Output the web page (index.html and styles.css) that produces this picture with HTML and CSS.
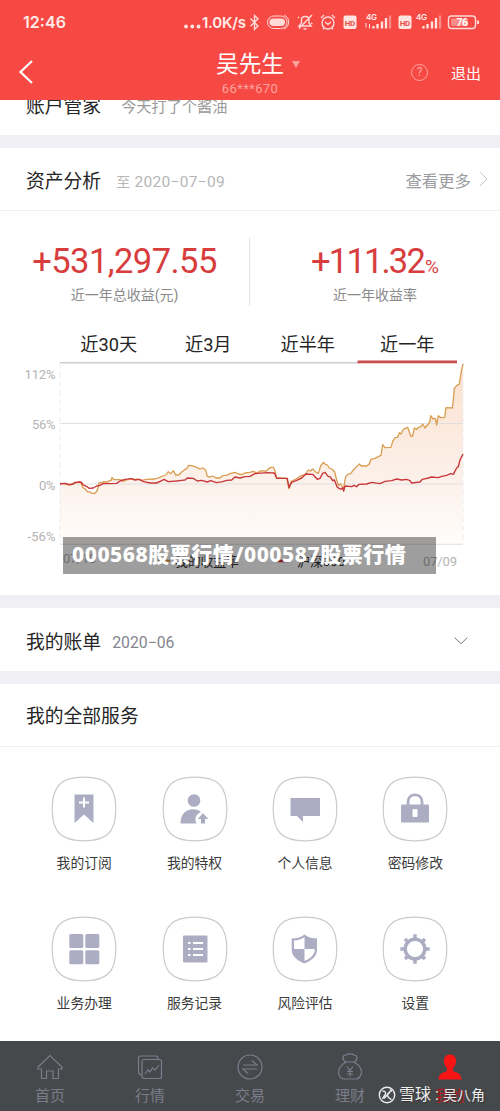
FILE: index.html
```
<!DOCTYPE html>
<html lang="zh-CN">
<head>
<meta charset="utf-8">
<title>账户</title>
<link rel="stylesheet" href="styles.css">
</head>
<body>
<div class="app">
  <header class="top">
    <svg class="status" viewBox="0 0 500 44">
      <g class="status-text">
        <text x="23" y="28" font-size="16" textLength="43">12:46</text>
        <text x="202" y="28" font-size="15" textLength="44">1.0K/s</text>
        <text x="366" y="19.500" font-size="8" textLength="11">4G</text>
        <text x="416" y="19.500" font-size="8" textLength="11">4G</text>
      </g>
      <g fill="#ffe5e2"><circle cx="186" cy="26.500" r="1.900"/><circle cx="192.300" cy="26.500" r="1.900"/><circle cx="198.500" cy="26.500" r="1.900"/></g>
      <g class="line-icon">
        <path d="M250.500 18.500 258 26l-3.500 3.300V15.500l3.500 3.300-7.500 7.400"/>
        <path d="M250 22.400h.4M259.800 22.400h.4"/>
        <rect x="267.500" y="16" width="19.500" height="12.500" rx="6.200" stroke-width="1"/>
        <path d="M284 15.500c6 1 6.500 11 0 13.500" stroke-width="1"/>
        <path d="M299 26h12l-2-3v-3.500c0-4-7.500-4-7.500 0V23zM303.500 29h3M312 15l-13 13.500M298 18l1-1M311 23l1.500 1"/>
        <circle cx="328" cy="23" r="6"/><path d="m325 22 3 2.300 3-2.300M321 18l3-3M335 18l-3-3M324 28l-1 1.300M332 28l1 1.300"/>
        <rect x="448.500" y="16" width="27" height="12.500" rx="3"/><path d="M478 20.500v3.500" stroke-width="2"/>
      </g>
      <rect x="269.500" y="18.500" width="15.500" height="7.500" rx="3.700" fill="#ffdcd9"/>
      <rect x="451" y="18.500" width="17" height="7.500" rx="1" fill="#f98c86"/>
      <g fill="#ffe5e2"><rect x="343.500" y="15.500" width="13" height="13.500" rx="2"/><rect x="398.500" y="15.500" width="13" height="13.500" rx="2"/></g>
      <g class="hd"><text x="344.800" y="25.600" textLength="10.500">HD</text><text x="399.800" y="25.600" textLength="10.500">HD</text></g>
      <text class="battery" x="456.500" y="26.200" textLength="11.500">76</text>
      <g class="bars"><path d="M373.500 28.500v-2.500M377.500 28.500v-4.500M382 28.500v-7M386 28.500v-10.500M423.500 28.500v-2.500M427.500 28.500v-4.500M432 28.500v-7M436 28.500v-10.500"/><path class="faint" d="M390 28.500v-13M440 28.500v-13"/><path d="M366 23v4.500M369.500 24v4.500" stroke-width="1"/></g>
    </svg>
    <div class="nav">
      <svg class="back" viewBox="0 0 16 26"><path d="M14 2 2.500 13 14 24"/></svg>
      <div class="user"><div class="user-name">吴先生<span class="caret"></span></div><div class="user-id">66***670</div></div>
      <div class="nav-right"><span class="help">?</span><span class="logout">退出</span></div>
    </div>
  </header>
  <section class="manager"><span class="title">账户管家</span><span class="note">今天打了个酱油</span></section>

  <section class="panel analysis">
    <div class="panel-head"><span class="title">资产分析</span><span class="date"><span class="to">至</span> 2020−07−09</span><span class="more">查看更多</span><svg class="chev" viewBox="0 0 9 16"><path d="m1 1 7 7-7 7"/></svg></div>
    <div class="stats">
      <div class="stat"><div class="num">+531,297.55</div><div class="label">近一年总收益(元)</div></div>
      <div class="stat"><div class="num ones">+111.32<small>%</small></div><div class="label">近一年收益率</div></div>
    </div>
    <div class="ranges"><span>近30天</span><span>近3月</span><span>近半年</span><span>近一年</span></div>
    <div class="chart">
      <svg viewBox="0 357 500 238">
        <defs>
          <linearGradient id="area" x1="0" y1="130" x2="0" y2="672" gradientUnits="userSpaceOnUse"><stop stop-color="#fbe1cd"/><stop offset=".62" stop-color="#fcf0e9"/><stop offset="1" stop-color="#fffdfb"/></linearGradient>
          <path id="mine" d="M180 490 190 490 200 493 208 496 218 491 228 489 238 485 243 490 248 502 256 507 262 515 270 516 275 520 283 520 288 517 293 508 297 489 305 487 315 485 322 487 328 482 333 482 336 472 341 479 360 479 370 484 380 480 390 476 402 479 412 477 425 481 440 478 465 477 478 473 488 468 498 465 505 455 512 461 520 452 527 465 536 465 545 456 554 449 560 446 566 436 575 437 590 442 600 447 608 444 617 450 622 469 630 471 637 468 648 474 660 474 668 467 680 466 692 460 705 457 715 462 725 464 735 459 750 457 760 454 770 459 785 452 798 454 806 446 813 442 820 442 825 453 830 473 860 475 867 506 873 484 888 477 905 466 915 465 925 450 932 453 938 447 945 455 955 460 962 438 970 427 976 433 982 435 988 444 996 447 1004 456 1010 480 1016 497 1022 491 1030 508 1037 470 1043 463 1052 461 1060 450 1070 440 1078 432 1084 438 1100 438 1108 432 1113 418 1125 415 1135 410 1143 406 1148 374 1155 383 1173 382 1178 364 1185 353 1193 352 1198 338 1203 342 1210 328 1223 322 1228 335 1232 348 1238 348 1243 324 1250 328 1256 322 1263 320 1268 312 1275 324 1285 312 1290 305 1292 287 1299 297 1306 295 1310 315 1315 287 1322 293 1334 292 1338 263 1357 264 1360 240 1363 205 1370 197 1378 192 1382 165 1386 145 1389 132"/>
        </defs>
        <g transform="translate(0 320) scale(.33333)"><path fill="url(#area)" d="M180 490 238 485 248 502 275 520 288 517 297 489 336 478 440 478 478 473 498 465 520 456 536 465 554 449 566 436 590 442 617 450 622 469 648 474 668 467 705 457 725 464 750 457 785 452 806 446 820 442 830 473 860 475 867 506 873 484 905 466 925 450 955 460 970 427 988 444 1004 456 1016 497 1030 508 1037 470 1052 461 1078 432 1100 438 1113 418 1143 406 1148 374 1155 383 1173 382 1185 353 1210 328 1223 322 1232 348 1238 348 1243 324 1263 320 1285 312 1292 287 1306 295 1310 315 1315 287 1334 292 1338 263 1357 264 1363 205 1378 192 1389 132V672H180z"/></g>
        <g class="grid"><path d="M60 423.500h403M60 484h403M60 544.300h403"/><path class="top-rule" d="M60 362.700h300"/><path class="dash" d="M60 363v181M463 363v181"/></g>
        <g transform="translate(0 320) scale(.33333)">
          <use href="#mine" class="mine"/>
          <path class="index" d="M180 492 195 490 210 494 220 492 225 487 243 486 250 495 262 501 268 505 280 504 290 498 300 496 310 490 325 491 350 490 360 483 375 478 395 476 405 480 418 478 430 485 450 489 470 489 485 482 492 478 505 485 530 483 545 481 555 480 562 474 580 475 592 483 605 481 622 486 632 482 650 488 668 485 680 481 695 480 705 471 720 474 735 470 750 469 765 461 800 458 823 459 830 475 862 475 867 503 875 487 890 481 905 474 917 462 938 463 945 470 952 478 960 475 968 460 975 457 985 470 990 470 998 482 1003 480 1012 502 1023 508 1028 503 1031 513 1035 498 1055 500 1062 496 1070 500 1077 493 1100 492 1115 487 1140 491 1155 484 1175 482 1190 477 1205 480 1220 478 1230 482 1235 489 1260 486 1267 478 1285 474 1295 471 1315 473 1325 469 1340 466 1352 461 1360 463 1370 444 1375 440 1380 420 1389 402"/>
        </g>
        <path d="M357.500 361.900h99.500" stroke="#c84f4d" stroke-width="2.800"/>
        <g class="axis"><text x="24.500" y="379" textLength="31">112%</text><text x="32" y="429" textLength="23.500">56%</text><text x="39" y="489.500" textLength="16.500">0%</text><text x="27.500" y="541" textLength="28">-56%</text><text x="63" y="562.500" textLength="33">07/10</text><text x="423" y="566" textLength="34">07/09</text></g>
        <g class="legend"><path d="M158 561h12" stroke="#d99d51"/><text x="175" y="566" textLength="64">我的收益率</text><path d="M276 561h13" stroke="#c8383b"/><text x="297" y="566" textLength="48">沪深300</text></g>
      </svg>
      <div class="banner">000568股票行情/000587股票行情</div>
    </div>
  </section>

  <section class="panel bill"><span class="title">我的账单</span><span class="bill-date">2020−06</span><svg class="down" viewBox="0 0 14 8"><path d="m.7.700 6.300 6 6.300-6"/></svg></section>

  <section class="panel services">
    <div class="services-head title">我的全部服务</div>
    <div class="service-grid">
      <div class="service"><svg viewBox="0 0 66 66"><use href="#tile"/><path fill="#acadc2" d="M23.500 18.500h19V47L33 38.500 23.500 47z"/><path d="M33 21.500v10M28 26.500h10" stroke="#fff" stroke-width="2"/></svg><span>我的订阅</span></div>
      <div class="service"><svg viewBox="0 0 66 66"><use href="#tile"/><g fill="#acadc2"><circle cx="32" cy="24.500" r="6.300"/><path d="M18.500 47.500C18.500 38 24 33.300 31 33.300c3.500 0 6 1 8 2.700-5 2-7 7-4.500 11.500z"/><path d="m41 37 5.200 6H43v4.500h-4V43h-3.200z"/></g></svg><span>我的特权</span></div>
      <div class="service"><svg viewBox="0 0 66 66"><use href="#tile"/><path fill="#acadc2" d="M18.500 22H48v18H31v6l-6-6h-6.500z"/></svg><span>个人信息</span></div>
      <div class="service"><svg viewBox="0 0 66 66"><use href="#tile"/><path d="M26 30v-4c0-9.500 14-9.500 14 0v4" fill="none" stroke="#acadc2" stroke-width="2.800"/><rect x="19" y="28.500" width="28" height="18" rx="1" fill="#acadc2"/><rect x="30.500" y="33" width="5" height="8" rx="1" fill="#fff"/></svg><span>密码修改</span></div>
      <div class="service"><svg viewBox="0 0 66 66"><use href="#tile"/><g fill="#acadc2"><rect x="18.300" y="18" width="14" height="14" rx="1.500"/><rect x="34.300" y="18" width="14" height="14" rx="1.500"/><rect x="18.300" y="34.200" width="14" height="14" rx="1.500"/><rect x="34.300" y="34.200" width="14" height="14" rx="1.500"/></g></svg><span>业务办理</span></div>
      <div class="service"><svg viewBox="0 0 66 66"><use href="#tile"/><rect x="21" y="19.500" width="24.500" height="27" rx="1" fill="#acadc2"/><path d="M26 27h2.500M26 33h2.500M26 39h2.500M31 27h10M31 33h10M31 39h10" stroke="#fff" stroke-width="2.200"/></svg><span>服务记录</span></div>
      <div class="service"><svg viewBox="0 0 66 66"><use href="#tile"/><path fill="#acadc2" d="M32.500 18.500c4 3 8 4 12.500 4V34c0 6.500-6 11-12.500 13.500C26 45 19.700 40.500 19.700 34V22.500c4.800 0 8.800-1 12.800-4z"/><path fill="#fff" d="M32.500 21v12H22v-8.500c4 0 7.500-1.200 10.500-3.500zM32.500 33h10.300c0 6-4.500 9.500-10.300 12z"/></svg><span>风险评估</span></div>
      <div class="service"><svg viewBox="0 0 66 66"><use href="#tile"/><g stroke="#acadc2" fill="none" stroke-width="3.500"><circle cx="33" cy="33" r="9.800"/><path d="M33 18.300v5M33 42.700v5M18.300 33h5M42.700 33h5M23 23l3 3M40 40l3 3M43 23l-3 3M26 40l-3 3"/></g></svg><span>设置</span></div>
    </div>
  </section>

  <nav class="tabs">
    <div class="tab"><svg viewBox="0 0 30 30"><path d="M3 15 15 3.500 27 15v2h-3.500v9.500H18V19h-6.500v7.500H6.500V17H3z"/></svg><span>首页</span></div>
    <div class="tab"><svg viewBox="0 0 30 30"><rect x="7" y="7.500" width="19.500" height="19" rx="2"/><path d="M7 23c-2 0-3.500-1-3.500-3V6c0-1.500.7-2 2-2H21c1.500 0 2 1.500 2 3.500M10 22l3-4 2 2 2.500-4 2.500 2 4-5"/></svg><span>行情</span></div>
    <div class="tab"><svg viewBox="0 0 30 30"><circle cx="15" cy="15" r="12"/><path d="M8 13h14l-5-4.500M22 17H8l5 4.500"/></svg><span>交易</span></div>
    <div class="tab"><svg viewBox="0 0 30 30"><path d="M11 10c-4-2-4-7 0-7 2-1.500 6-1.500 8 0 4 0 4 5 0 7 5 3 7.500 6 7.500 10 0 4-3 7-5.500 7H9c-3 0-5.500-3-5.500-7 0-4 2.500-7 7.500-10zM10.500 10h9M12 14.500l3 4 3-4M15 18.500v6M12 19.500h6M12 22h6"/></svg><span>理财</span></div>
    <div class="tab active"><svg viewBox="0 0 30 30"><path d="M15 2.500c4 0 6 3 6 6 0 4-1 5.500-3 7.500v3c4 2 8 2 8.500 8.500h-23C4 21 8 21 12 19v-3c-2-2-3-3.500-3-7.500 0-3 2-6 6-6z"/></svg><span>我的</span></div>
    <div class="watermark"><svg viewBox="0 0 18 18"><circle cx="9" cy="9" r="7.700"/><path d="M4.500 5c3 0 4 2 2.500 4s-2 2-2.500 4M13.500 4c-1 2-4 2.500-4 5s2 3.500 4 4.500M12 3.500l1.800 2M6 12.500 12 6"/></svg><span>雪球</span><span class="colon">:</span><span class="author">吴八角</span></div>
  </nav>
</div>
<svg class="defs"><defs><path id="tile" d="M33 1.200C56 1.200 64.800 10 64.800 33S56 64.800 33 64.800 1.200 56 1.200 33 10 1.200 33 1.200z" fill="#fff" stroke="#cbcbcd" stroke-width="1.200"/></defs></svg>
</body>
</html>
```
FILE: styles.css
```
* { box-sizing: border-box; }
body { margin: 0; background: #fff; font-family: Roboto, "Noto Sans CJK SC", sans-serif; color: #252525; }
.app { width: 500px; height: 1111px; overflow: hidden; background: #f0eff4; display: flex; flex-direction: column; }
.defs { display: block; width: 0; height: 0; }
.top { height: 100px; flex: none; background: #f74944; color: #fff; }
.status { display: block; width: 500px; height: 44px; }
.status-text { fill: #ffebe8; font-family: Inter, sans-serif; font-weight: 600; }
.line-icon { fill: none; stroke: #ffdcd9; stroke-width: 1.4; }
.hd { fill: #e7504b; font-size: 8px; font-weight: 700; }
.battery { fill: #fff; font-size: 10.5px; font-weight: 700; }
.bars { stroke: #ffe5e2; stroke-width: 2.3; }
.bars .faint { stroke: #fa8d88; }
.nav { height: 56px; display: grid; grid-template-columns: 130px 240px 130px; }
.back { width: 16px; height: 26px; margin: 15px 0 0 18px; fill: none; stroke: #fff; stroke-width: 2.2; }
.user { text-align: center; }
.user-name { height: 38px; line-height: 40px; font-size: 22.7px; padding: 3px 0 0 16px; display: flex; justify-content: center; align-items: center; }
.caret { margin-left: 8px; border: 4px solid transparent; border-top: 7px solid #fda29f; border-bottom: 0; }
.user-id { font-size: 13px; line-height: 13px; letter-spacing: .4px; color: #fda29f; }
.nav-right { display: flex; align-items: center; height: 57px; padding-left: 41px; }
.help { width: 17px; height: 17px; border: 1px solid #fda29f; border-radius: 50%; color: #fda29f; font-size: 12px; line-height: 15px; text-align: center; }
.logout { margin-left: 23px; padding-top: 2px; font-size: 15px; line-height: 20px; }
.manager { height: 35px; flex: none; background: #fff; overflow: hidden; padding-left: 26px; display: flex; align-items: flex-start; }
.title { font-size: 18.8px; line-height: 28px; }
.manager .title { margin-top: -7px; }
.note { margin: -7px 0 0 20px; font-size: 15.2px; line-height: 28px; color: #999; }
.panel { background: #fff; margin-top: 13px; flex: none; }
.analysis { height: 447px; }
.panel-head { height: 63px; display: flex; align-items: center; border-bottom: 1.5px solid #eee; padding: 4px 12px 0 26px; }
.panel-head .title { padding-top: 1px; }
.date { margin-left: 15px; color: #b6b6b8; font-size: 15.5px; letter-spacing: .3px; }
.to { font-size: 14px; }
.more { margin: -3px 0 0 auto; color: #9b9ba0; font-size: 16.4px; }
.chev { width: 9px; height: 16px; margin: -4px 0 0 8px; fill: none; stroke: #c5c5c8; }
.stats { height: 116px; display: grid; grid-template-columns: 250px 250px; padding-top: 26px; }
.stat { height: 69px; text-align: center; }
.stat:first-child { border-right: 1px solid #e4e4e4; }
.num { height: 49px; line-height: 49px; font-size: 34.5px; letter-spacing: -.55px; color: #d83d3d; }
.ones { letter-spacing: -1.8px; }
.num small { font-size: 19px; letter-spacing: 0; padding-left: 1px; }
.label { font-size: 14px; line-height: 18px; color: #8a8a8a; }
.ranges { height: 30px; display: grid; grid-template-columns: repeat(4, 99.5px); padding-left: 59px; text-align: center; font-size: 18.2px; line-height: 36px; }
.chart { height: 238px; position: relative; }
.chart svg { display: block; width: 500px; height: 238px; }
.grid { stroke: #e2e0df; fill: none; stroke-width: 1; }
.grid .top-rule { stroke: #ccc; stroke-width: 1.4; }
.grid .dash { stroke: #eee; stroke-dasharray: 6 3; }
.mine { fill: none; stroke: #d99d51; stroke-width: 3.9; stroke-linejoin: round; }
.index { fill: none; stroke: #c8383b; stroke-width: 4.2; stroke-linejoin: round; }
.axis { fill: #b4b4b4; font-size: 13px; }
.legend { fill: #333; font-size: 13px; stroke-width: 2.5; }
.legend text { stroke: none; }
.banner { position: absolute; left: 63px; top: 180px; width: 373px; height: 37px; padding-left: 9px; background: rgba(0, 0, 0, .38); color: #fff; font: 800 21px/34px "Noto Sans", "Noto Sans CJK SC", sans-serif; letter-spacing: .56px; white-space: nowrap; }
.bill { height: 63px; display: flex; align-items: center; padding: 6px 32px 0 26px; }
.bill-date { margin-left: 11px; font-size: 15.8px; color: #85858e; }
.down { width: 14px; height: 8px; margin: -3px 0 0 auto; fill: none; stroke: #77777d; }
.services { height: 357px; }
.services-head { height: 63px; line-height: 63px; padding: 2px 0 0 26px; border-bottom: 1.5px solid #eee; }
.service-grid { display: grid; grid-template-columns: repeat(4, 110.4px); grid-auto-rows: 140px; padding: 29px 0 0 29px; }
.service { display: flex; flex-direction: column; align-items: center; font-size: 13.8px; line-height: 20px; color: #3b3b3b; }
.service svg { width: 66px; height: 66px; margin-bottom: 11px; }
.tabs { position: relative; height: 70px; flex: none; display: grid; grid-template-columns: repeat(5, 100px); background: #46494c; }
.tab { display: flex; flex-direction: column; align-items: center; padding-top: 11px; color: #7b7d8a; font-size: 15px; line-height: 20px; }
.tab svg { width: 30px; height: 30px; margin-bottom: 4px; fill: none; stroke: #7b7d8a; stroke-width: 1.2; }
.tab.active { color: #b5181c; }
.tab.active svg { fill: #fb1414; stroke: none; }
.watermark { position: absolute; left: 378px; top: 44px; display: flex; align-items: center; color: #ececec; font-size: 16px; line-height: 20px; white-space: nowrap; text-shadow: 1px 1px 1px #333; }
.watermark svg { width: 18px; height: 18px; margin-right: 3px; fill: none; stroke: #ececec; stroke-width: 1.4; }
.colon { width: 12px; text-align: center; }
.author { font-size: 14px; }
```
